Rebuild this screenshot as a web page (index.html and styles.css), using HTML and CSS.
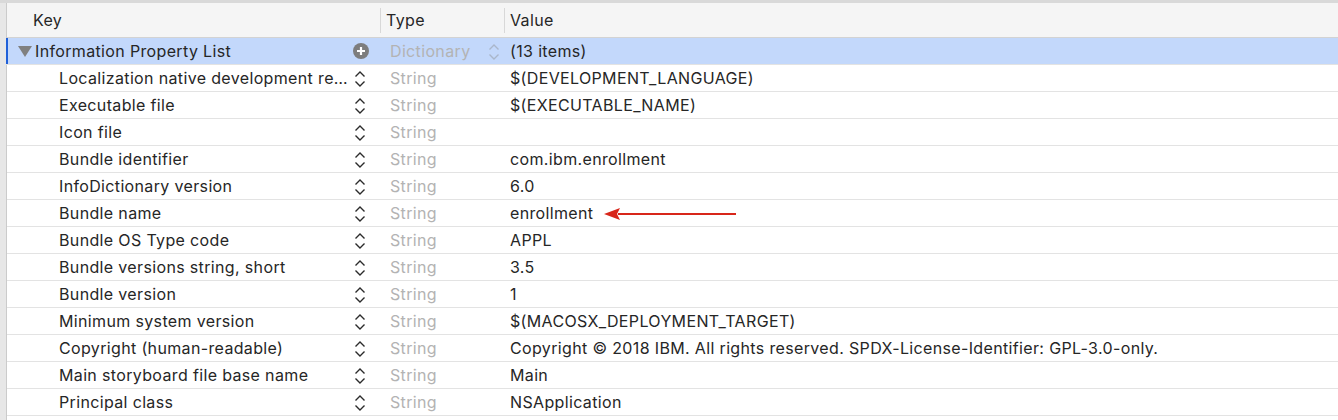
FILE: index.html
```html
<!DOCTYPE html>
<html>
<head>
<meta charset="utf-8">
<link rel="stylesheet" href="styles.css">
</head>
<body>
<div class="page">
  <div class="gutter"></div>
  <div class="table">
    <div class="header">
      <div class="hcell hkey">Key</div>
      <div class="hcell hsep">Type</div>
      <div class="hcell hsep">Value</div>
    </div>
    <div class="row selected">
      <div class="key root"><span class="tri"></span><span class="ktext">Information Property List</span>
        <svg class="plus" width="16" height="16" viewBox="0 0 16 16"><circle cx="8" cy="8" r="8" fill="#7d7d7d"/><path d="M8 4v8M4 8h8" stroke="#fff" stroke-width="2.2"/></svg>
      </div>
      <div class="type">Dictionary
        <svg class="stepper light" width="12" height="18" viewBox="0 0 12 18"><path d="M1.5 6.5L6 2l4.5 4.5M1.5 11.5L6 16l4.5-4.5" fill="none" stroke="#aab6ca" stroke-width="1.4"/></svg>
      </div>
      <div class="value">(13 items)</div>
    </div>
    <div class="row"><div class="key"><span class="ktext">Localization native development re…</span><svg class="stepper" width="12" height="18" viewBox="0 0 12 18"><path d="M1.5 6.5L6 2l4.5 4.5M1.5 11.5L6 16l4.5-4.5" fill="none" stroke="#2b2b2b" stroke-width="1.4"/></svg></div><div class="type">String</div><div class="value">$(DEVELOPMENT_LANGUAGE)</div></div>
    <div class="row"><div class="key"><span class="ktext">Executable file</span><svg class="stepper" width="12" height="18" viewBox="0 0 12 18"><path d="M1.5 6.5L6 2l4.5 4.5M1.5 11.5L6 16l4.5-4.5" fill="none" stroke="#2b2b2b" stroke-width="1.4"/></svg></div><div class="type">String</div><div class="value">$(EXECUTABLE_NAME)</div></div>
    <div class="row"><div class="key"><span class="ktext">Icon file</span><svg class="stepper" width="12" height="18" viewBox="0 0 12 18"><path d="M1.5 6.5L6 2l4.5 4.5M1.5 11.5L6 16l4.5-4.5" fill="none" stroke="#2b2b2b" stroke-width="1.4"/></svg></div><div class="type">String</div><div class="value"></div></div>
    <div class="row"><div class="key"><span class="ktext">Bundle identifier</span><svg class="stepper" width="12" height="18" viewBox="0 0 12 18"><path d="M1.5 6.5L6 2l4.5 4.5M1.5 11.5L6 16l4.5-4.5" fill="none" stroke="#2b2b2b" stroke-width="1.4"/></svg></div><div class="type">String</div><div class="value">com.ibm.enrollment</div></div>
    <div class="row"><div class="key"><span class="ktext">InfoDictionary version</span><svg class="stepper" width="12" height="18" viewBox="0 0 12 18"><path d="M1.5 6.5L6 2l4.5 4.5M1.5 11.5L6 16l4.5-4.5" fill="none" stroke="#2b2b2b" stroke-width="1.4"/></svg></div><div class="type">String</div><div class="value">6.0</div></div>
    <div class="row"><div class="key"><span class="ktext">Bundle name</span><svg class="stepper" width="12" height="18" viewBox="0 0 12 18"><path d="M1.5 6.5L6 2l4.5 4.5M1.5 11.5L6 16l4.5-4.5" fill="none" stroke="#2b2b2b" stroke-width="1.4"/></svg></div><div class="type">String</div><div class="value">enrollment<svg class="arrow" width="132" height="14" viewBox="0 0 132 14"><path d="M14 7H132" stroke="#d8261a" stroke-width="2"/><path d="M0 7L16 1L13 7L16 13Z" fill="#d8261a"/></svg></div></div>
    <div class="row"><div class="key"><span class="ktext">Bundle OS Type code</span><svg class="stepper" width="12" height="18" viewBox="0 0 12 18"><path d="M1.5 6.5L6 2l4.5 4.5M1.5 11.5L6 16l4.5-4.5" fill="none" stroke="#2b2b2b" stroke-width="1.4"/></svg></div><div class="type">String</div><div class="value">APPL</div></div>
    <div class="row"><div class="key"><span class="ktext">Bundle versions string, short</span><svg class="stepper" width="12" height="18" viewBox="0 0 12 18"><path d="M1.5 6.5L6 2l4.5 4.5M1.5 11.5L6 16l4.5-4.5" fill="none" stroke="#2b2b2b" stroke-width="1.4"/></svg></div><div class="type">String</div><div class="value">3.5</div></div>
    <div class="row"><div class="key"><span class="ktext">Bundle version</span><svg class="stepper" width="12" height="18" viewBox="0 0 12 18"><path d="M1.5 6.5L6 2l4.5 4.5M1.5 11.5L6 16l4.5-4.5" fill="none" stroke="#2b2b2b" stroke-width="1.4"/></svg></div><div class="type">String</div><div class="value">1</div></div>
    <div class="row"><div class="key"><span class="ktext">Minimum system version</span><svg class="stepper" width="12" height="18" viewBox="0 0 12 18"><path d="M1.5 6.5L6 2l4.5 4.5M1.5 11.5L6 16l4.5-4.5" fill="none" stroke="#2b2b2b" stroke-width="1.4"/></svg></div><div class="type">String</div><div class="value">$(MACOSX_DEPLOYMENT_TARGET)</div></div>
    <div class="row"><div class="key"><span class="ktext">Copyright (human-readable)</span><svg class="stepper" width="12" height="18" viewBox="0 0 12 18"><path d="M1.5 6.5L6 2l4.5 4.5M1.5 11.5L6 16l4.5-4.5" fill="none" stroke="#2b2b2b" stroke-width="1.4"/></svg></div><div class="type">String</div><div class="value">Copyright © 2018 IBM. All rights reserved. SPDX-License-Identifier: GPL-3.0-only.</div></div>
    <div class="row"><div class="key"><span class="ktext">Main storyboard file base name</span><svg class="stepper" width="12" height="18" viewBox="0 0 12 18"><path d="M1.5 6.5L6 2l4.5 4.5M1.5 11.5L6 16l4.5-4.5" fill="none" stroke="#2b2b2b" stroke-width="1.4"/></svg></div><div class="type">String</div><div class="value">Main</div></div>
    <div class="row"><div class="key"><span class="ktext">Principal class</span><svg class="stepper" width="12" height="18" viewBox="0 0 12 18"><path d="M1.5 6.5L6 2l4.5 4.5M1.5 11.5L6 16l4.5-4.5" fill="none" stroke="#2b2b2b" stroke-width="1.4"/></svg></div><div class="type">String</div><div class="value">NSApplication</div></div>
  </div>
</div>
</body>
</html>
```
FILE: styles.css
```css
* { box-sizing: border-box; }
html, body { margin: 0; padding: 0; background: #fff; }
body {
  font-family: Inter, "Liberation Sans", sans-serif;
  font-size: 16px;
  letter-spacing: 0.35px;
  color: #262626;
  height: 420px;
  overflow: hidden;
  border-top: 3px solid #d9d9d9;
}
.page { display: flex; height: 100%; }
.gutter {
  width: 7px;
  flex: none;
  background: #e7e7e7;
  border-right: 1px solid #cbcbcb;
}
.table { flex: 1; display: flex; flex-direction: column; }
.header {
  height: 35px;
  background: #f5f5f5;
  border-bottom: 1px solid #d3d3d3;
  display: grid;
  grid-template-columns: 373px 124px 1fr;
  align-items: center;
}
.hcell { height: 100%; display: flex; align-items: center; }
.hkey { padding-left: 26px; }
.hsep { padding-left: 6px; position: relative; }
.hsep::before {
  content: "";
  position: absolute;
  left: 0; top: 5px; bottom: 4px;
  width: 1px;
  background: #d8d8d8;
}
.row {
  height: 27px;
  display: grid;
  grid-template-columns: 373px 124px 1fr;
  align-items: center;
  border-bottom: 1px solid #e3e3e3;
  white-space: nowrap;
}
.row.selected {
  background: #c3d8fb;
  box-shadow: inset 2px 0 0 #2060d8;
  margin-left: -1px;
  padding-left: 1px;
}
.key {
  display: flex;
  align-items: center;
  padding-left: 52px;
  padding-right: 14px;
  height: 100%;
}
.key.root { padding-left: 11px; padding-right: 11px; }
.ktext { flex: 1; overflow: hidden; }
.tri {
  width: 0; height: 0;
  border-left: 7px solid transparent;
  border-right: 7px solid transparent;
  border-top: 11px solid #808080;
  margin-right: 3px;
  margin-top: 1px;
}
.stepper { flex: none; margin-top: 1px; }
.type {
  color: #b3b3b3;
  padding-left: 10px;
  padding-right: 4px;
  display: flex;
  align-items: center;
  justify-content: space-between;
}
.value { padding-left: 6px; display: flex; align-items: center; }
.arrow { margin-left: 11px; margin-top: 1px; }
```
